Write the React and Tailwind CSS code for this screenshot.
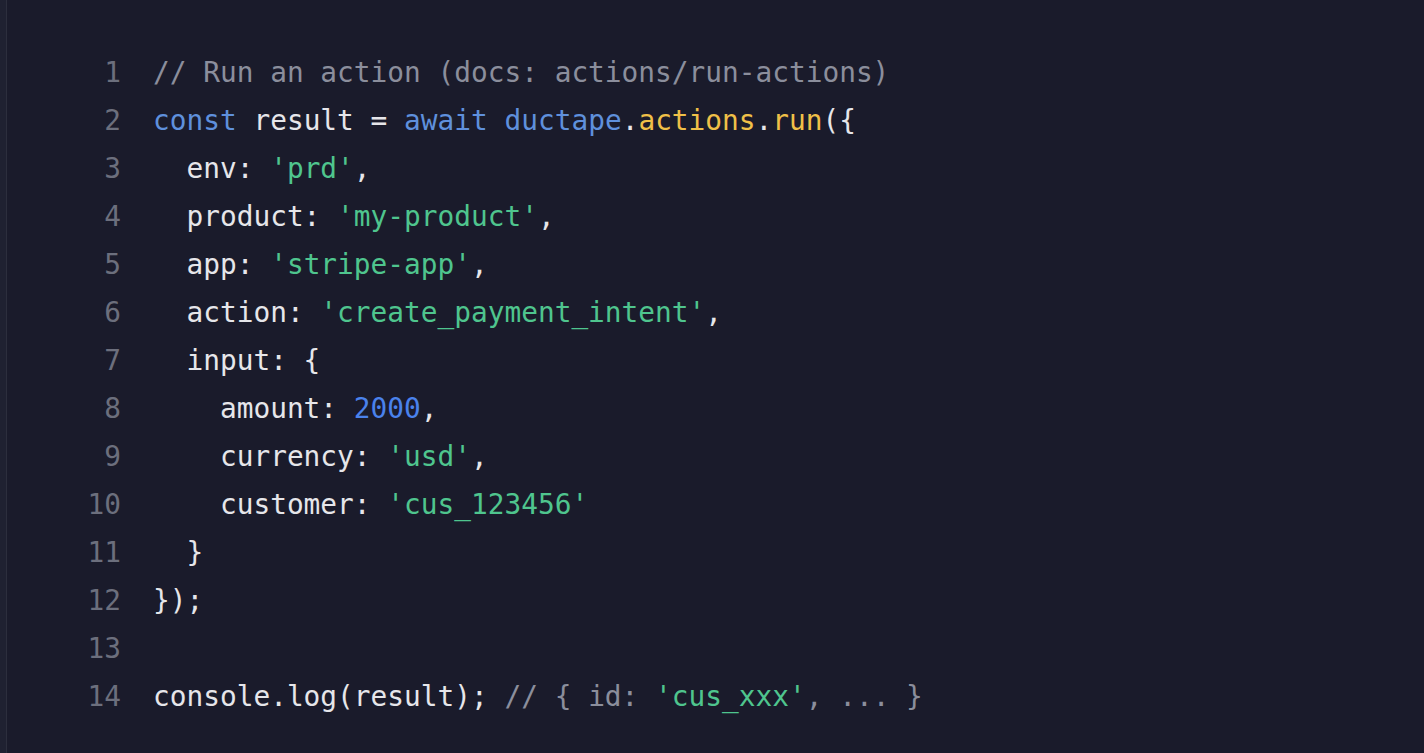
const lines = [
  [['c', '// Run an action (docs: actions/run-actions)']],
  [['k', 'const'], ['t', ' result = '], ['k', 'await'], ['t', ' '], ['k', 'ductape'], ['t', '.'], ['f', 'actions'], ['t', '.'], ['f', 'run'], ['t', '({']],
  [['t', '  env: '], ['s', "'prd'"], ['t', ',']],
  [['t', '  product: '], ['s', "'my-product'"], ['t', ',']],
  [['t', '  app: '], ['s', "'stripe-app'"], ['t', ',']],
  [['t', '  action: '], ['s', "'create_payment_intent'"], ['t', ',']],
  [['t', '  input: {']],
  [['t', '    amount: '], ['n', '2000'], ['t', ',']],
  [['t', '    currency: '], ['s', "'usd'"], ['t', ',']],
  [['t', '    customer: '], ['s', "'cus_123456'"]],
  [['t', '  }']],
  [['t', '});']],
  [],
  [['t', 'console.log(result); '], ['c', '// { id: '], ['s', "'cus_xxx'"], ['c', ', ... }']],
];

const tone = {
  t: 'text-[#e6e6ea]',
  c: 'text-[#8b8e9c]',
  k: 'text-[#5f90dc]',
  f: 'text-[#f0c048]',
  s: 'text-[#4fc58e]',
  n: 'text-[#4a82ec]',
};

export default function App() {
  return (
    <div className="flex w-[1424px] h-[753px] bg-[#1a1b2b] overflow-hidden">
      {/* editor gutter strip */}
      <div className="w-[7px] shrink-0 bg-[#1f2131] border-r border-[#2c2e3d]" />

      <div
        className="flex-1 pt-[49px] pl-[79px] text-[27.8px] leading-[48px] whitespace-pre"
        style={{ fontFamily: '"DejaVu Sans Mono", "Liberation Mono", monospace' }}
      >
        {lines.map((parts, i) => (
          <div key={i} className="flex">
            <span className="w-[35px] text-right text-[#6c6f7d] shrink-0">{i + 1}</span>
            <span className="pl-[32px]">
              {parts.map(([kind, text], j) => (
                <span key={j} className={tone[kind]}>{text}</span>
              ))}
            </span>
          </div>
        ))}
      </div>
    </div>
  );
}
